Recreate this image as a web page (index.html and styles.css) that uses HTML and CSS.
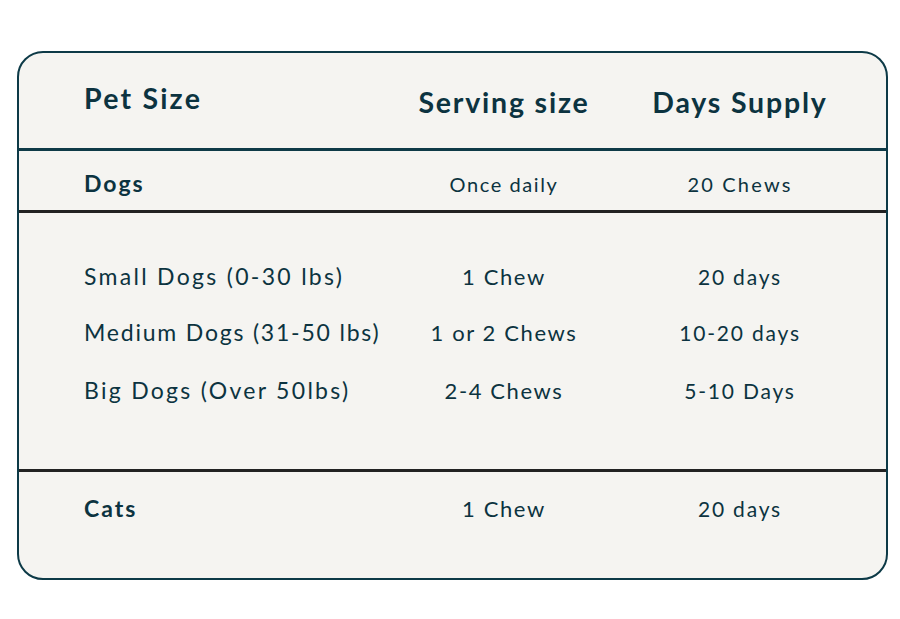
FILE: index.html
```html
<!DOCTYPE html>
<html lang="en">
<head>
<meta charset="utf-8">
<title>Pet Size Serving Table</title>
<link rel="stylesheet" href="styles.css">
</head>
<body>
<div class="card">
  <div class="section head">
    <div class="row">
      <div class="c1 h-pet">Pet Size</div>
      <div class="c2 h-serv">Serving size</div>
      <div class="c3 h-days">Days Supply</div>
    </div>
  </div>
  <div class="section dogs">
    <div class="row">
      <div class="c1 bold">Dogs</div>
      <div class="c2 small">Once daily</div>
      <div class="c3 small">20 Chews</div>
    </div>
  </div>
  <div class="section sizes">
    <div class="row r-small">
      <div class="c1">Small Dogs (0-30 lbs)</div>
      <div class="c2">1 Chew</div>
      <div class="c3 sm2">20 days</div>
    </div>
    <div class="row r-med">
      <div class="c1">Medium Dogs (31-50 lbs)</div>
      <div class="c2">1 or 2 Chews</div>
      <div class="c3 sm2">10-20 days</div>
    </div>
    <div class="row r-big">
      <div class="c1">Big Dogs (Over 50lbs)</div>
      <div class="c2">2-4 Chews</div>
      <div class="c3 sm2">5-10 Days</div>
    </div>
  </div>
  <div class="section cats">
    <div class="row">
      <div class="c1 bold">Cats</div>
      <div class="c2">1 Chew</div>
      <div class="c3 sm2">20 days</div>
    </div>
  </div>
</div>
</body>
</html>
```
FILE: styles.css
```css
html, body {
  margin: 0;
  padding: 0;
  background: #ffffff;
}
body {
  padding: 51px 12px 0 17px;
  font-family: "Lato", "Open Sans", sans-serif;
  color: #0c3340;
}
.card {
  width: 867px;
  height: 525px;
  border: 2px solid #0d3a47;
  border-radius: 26px;
  background: #f5f4f1;
  box-sizing: content-box;
  display: flex;
  flex-direction: column;
  overflow: hidden;
}
.section {
  display: flex;
  flex-direction: column;
}
.row {
  display: grid;
  grid-template-columns: 320px 200px 272px;
  padding-left: 65px;
  align-items: baseline;
  white-space: nowrap;
  font-size: 22px;
  letter-spacing: 1.6px;
}
.c1 { letter-spacing: 2.3px; font-size: 23px; }
.c2, .c3 { text-align: center; }
.head {
  height: 95px;
  border-bottom: 3px solid #0e3a47;
  box-sizing: content-box;
}
.head .row {
  padding-top: 32px;
  font-weight: 700;
  font-size: 28.5px;
  letter-spacing: 1.8px;
}
.head .c1 { font-size: 28.5px; letter-spacing: 2.2px; }
.h-pet { position: relative; top: -4px; }
.dogs {
  height: 59px;
  border-bottom: 3px solid #222222;
  justify-content: center;
}
.dogs .row { padding-top: 4px; }
.bold { font-weight: 700; font-size: 23px; }
.dogs .bold, .cats .bold { letter-spacing: 2px; }
.small { font-size: 20px; letter-spacing: 1.6px; }
.dogs .c3 { letter-spacing: 2.2px; }
.sizes {
  height: 259px;
  border-bottom: 3px solid #222222;
  padding-top: 49px;
  box-sizing: border-box;
}
.sizes .row { height: 56px; }
.r-med .c1 { letter-spacing: 1.8px; }
.r-big { margin-top: 2px; }
.sm2 { font-size: 21px; letter-spacing: 1.8px; }
.cats {
  flex: 1;
  padding-top: 22px;
}
```
